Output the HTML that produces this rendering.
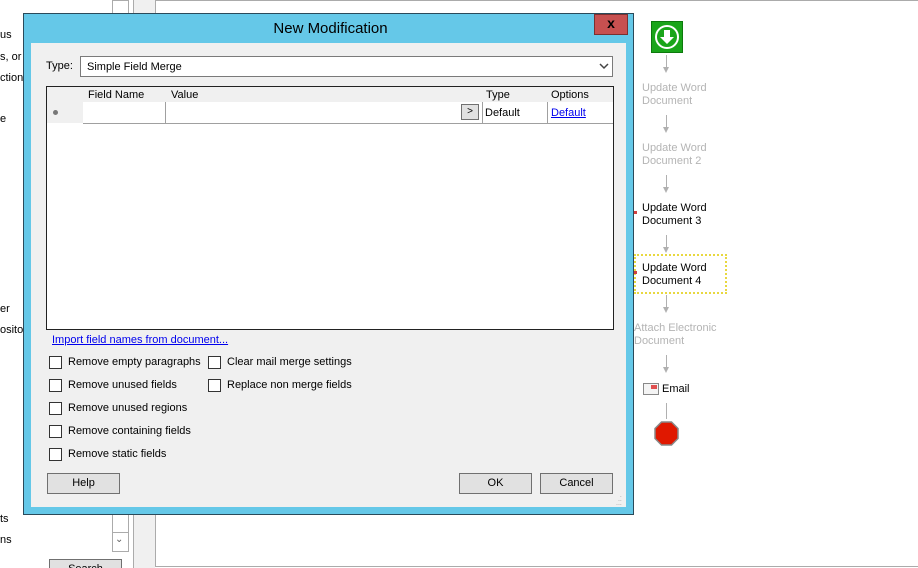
<!DOCTYPE html>
<html><head><meta charset="utf-8"><style>
*{margin:0;padding:0;box-sizing:border-box}
html,body{width:918px;height:568px;overflow:hidden}
body{position:relative;background:#fff;font-family:"Liberation Sans",sans-serif;font-size:11px;color:#000}
.a{position:absolute;white-space:nowrap}
.cb{position:absolute;width:13px;height:13px;border:1px solid #333;background:#fff}
.btn{position:absolute;height:21px;border:1px solid #707070;background:#e1e1e1;text-align:center;line-height:19px}
.g{color:#b4b4b4}
.ar{position:absolute;left:666px;width:1px;background:#b0b0b0}
.ah{position:absolute;left:663px;width:0;height:0;border-left:3.5px solid transparent;border-right:3.5px solid transparent;border-top:6px solid #b0b0b0}
</style></head><body>
<div class="a" style="left:0;top:29px">us</div>
<div class="a" style="left:0;top:51px">s, or</div>
<div class="a" style="left:0;top:72px">ction</div>
<div class="a" style="left:0;top:113px">e</div>
<div class="a" style="left:0;top:303px">er</div>
<div class="a" style="left:0;top:324px">osito</div>
<div class="a" style="left:0;top:513px">ts</div>
<div class="a" style="left:0;top:534px">ns</div>
<div class="a" style="left:112px;top:0;width:17px;height:552px;border:1px solid #ababab;background:#fff"></div>
<div class="a" style="left:113px;top:532px;width:15px;height:1px;background:#ababab"></div>
<div class="a" style="left:115px;top:534px;font-size:10px;color:#606060">&#8964;</div>
<div class="btn" style="left:49px;top:559px;width:73px">Search</div>
<div class="a" style="left:133px;top:0;width:1px;height:568px;background:#ababab"></div>
<div class="a" style="left:134px;top:0;width:21px;height:568px;background:#f0f0f0"></div>
<div class="a" style="left:155px;top:0;width:763px;height:567px;border:1px solid #ababab;border-right:none;background:#fff"></div>
<div class="a" style="left:651px;top:21px;width:32px;height:32px;background:#1aa51a;border:1px solid #0d7a0d"></div>
<svg class="a" style="left:651px;top:21px" width="32" height="32"><circle cx="16" cy="16" r="11" fill="none" stroke="#fff" stroke-width="2"/><path d="M13 9h6v7h4l-7 7-7-7h4z" fill="#fff"/></svg>
<div class="ar" style="top:55px;height:14px"></div><div class="ah" style="top:67px"></div>
<div class="a g" style="left:642px;top:82px;line-height:13px">Update Word<br>Document</div>
<div class="ar" style="top:115px;height:14px"></div><div class="ah" style="top:127px"></div>
<div class="a g" style="left:642px;top:142px;line-height:13px">Update Word<br>Document 2</div>
<div class="ar" style="top:175px;height:14px"></div><div class="ah" style="top:187px"></div>
<div class="a" style="left:642px;top:202px;line-height:13px">Update Word<br>Document 3</div>
<div class="a" style="left:634px;top:211px;width:3px;height:3px;background:#d04040"></div>
<div class="ar" style="top:235px;height:14px"></div><div class="ah" style="top:247px"></div>
<div class="a" style="left:634px;top:254px;width:93px;height:40px;border:2px dotted #e8d840"></div>
<div class="a" style="left:642px;top:262px;line-height:13px">Update Word<br>Document 4</div>
<div class="a" style="left:634px;top:271px;width:3px;height:3px;background:#d04040"></div>
<div class="ar" style="top:295px;height:14px"></div><div class="ah" style="top:307px"></div>
<div class="a g" style="left:634px;top:322px;line-height:13px">Attach Electronic<br>Document</div>
<div class="ar" style="top:355px;height:14px"></div><div class="ah" style="top:367px"></div>
<div class="a" style="left:643px;top:383px;width:16px;height:12px;border:1px solid #888;background:#f4f4f4"></div>
<div class="a" style="left:651px;top:385px;width:6px;height:4px;background:#e05050"></div>
<div class="a" style="left:662px;top:383px">Email</div>
<div class="ar" style="top:403px;height:16px"></div>
<svg class="a" style="left:654px;top:421px" width="25" height="25"><polygon points="7.5,1 17.5,1 24,7.5 24,17.5 17.5,24 7.5,24 1,17.5 1,7.5" fill="#e01800" stroke="#888" stroke-width="1.5"/></svg>
<div class="a" style="left:23px;top:13px;width:611px;height:502px;background:#65c8e8;border:1px solid #2a4a5a"></div>
<div class="a" style="left:23px;top:20px;width:611px;text-align:center;font-size:15px;padding-left:4px">New Modification</div>
<div class="a" style="left:594px;top:14px;width:34px;height:21px;background:#c75050;border:1px solid #7a3030;color:#000;font-weight:bold;text-align:center;line-height:17px;font-size:14px">x</div>
<div class="a" style="left:31px;top:43px;width:595px;height:464px;background:#f0f0f0"></div>
<div class="a" style="left:46px;top:60px">Type:</div>
<div class="a" style="left:80px;top:56px;width:533px;height:21px;border:1px solid #7a7a7a;background:#fff;padding:4px 0 0 6px">Simple Field Merge</div>
<svg class="a" style="left:599px;top:63px" width="10" height="7"><path d="M1 1l4 4 4-4" fill="none" stroke="#444" stroke-width="1.5"/></svg>
<div class="a" style="left:46px;top:86px;width:568px;height:244px;border:1px solid #222;background:#fff"></div>
<div class="a" style="left:47px;top:87px;width:566px;height:15px;background:#f0f0f0"></div>
<div class="a" style="left:47px;top:102px;width:36px;height:21px;background:#f0f0f0"></div>
<div class="a" style="left:83px;top:123px;width:530px;height:1px;background:#a0a0a0"></div>
<div class="a" style="left:165px;top:102px;width:1px;height:21px;background:#a0a0a0"></div>
<div class="a" style="left:482px;top:102px;width:1px;height:21px;background:#a0a0a0"></div>
<div class="a" style="left:547px;top:102px;width:1px;height:21px;background:#a0a0a0"></div>
<div class="a" style="left:88px;top:89px">Field Name</div>
<div class="a" style="left:171px;top:89px">Value</div>
<div class="a" style="left:486px;top:89px">Type</div>
<div class="a" style="left:551px;top:89px">Options</div>
<div class="a" style="left:53px;top:110px;width:5px;height:5px;border-radius:50%;background:#777"></div>
<div class="a" style="left:461px;top:104px;width:18px;height:16px;border:1px solid #707070;background:#e1e1e1;font-size:10px;text-align:center;line-height:14px">&gt;</div>
<div class="a" style="left:485px;top:107px">Default</div>
<div class="a" style="left:551px;top:107px;color:#0000ee;text-decoration:underline">Default</div>
<div class="a" style="left:52px;top:334px;color:#0000ee;text-decoration:underline">Import field names from document...</div>
<div class="cb" style="left:49px;top:356px"></div><div class="a" style="left:68px;top:356px">Remove empty paragraphs</div>
<div class="cb" style="left:49px;top:379px"></div><div class="a" style="left:68px;top:379px">Remove unused fields</div>
<div class="cb" style="left:49px;top:402px"></div><div class="a" style="left:68px;top:402px">Remove unused regions</div>
<div class="cb" style="left:49px;top:425px"></div><div class="a" style="left:68px;top:425px">Remove containing fields</div>
<div class="cb" style="left:49px;top:448px"></div><div class="a" style="left:68px;top:448px">Remove static fields</div>
<div class="cb" style="left:208px;top:356px"></div><div class="a" style="left:227px;top:356px">Clear mail merge settings</div>
<div class="cb" style="left:208px;top:379px"></div><div class="a" style="left:227px;top:379px">Replace non merge fields</div>
<div class="btn" style="left:47px;top:473px;width:73px">Help</div>
<div class="btn" style="left:459px;top:473px;width:73px">OK</div>
<div class="btn" style="left:540px;top:473px;width:73px">Cancel</div>
<div class="a" style="left:616px;top:494px;font-size:7px;color:#999;line-height:4px">&nbsp;&nbsp;.<br>&nbsp;..<br>...</div>
</body></html>
